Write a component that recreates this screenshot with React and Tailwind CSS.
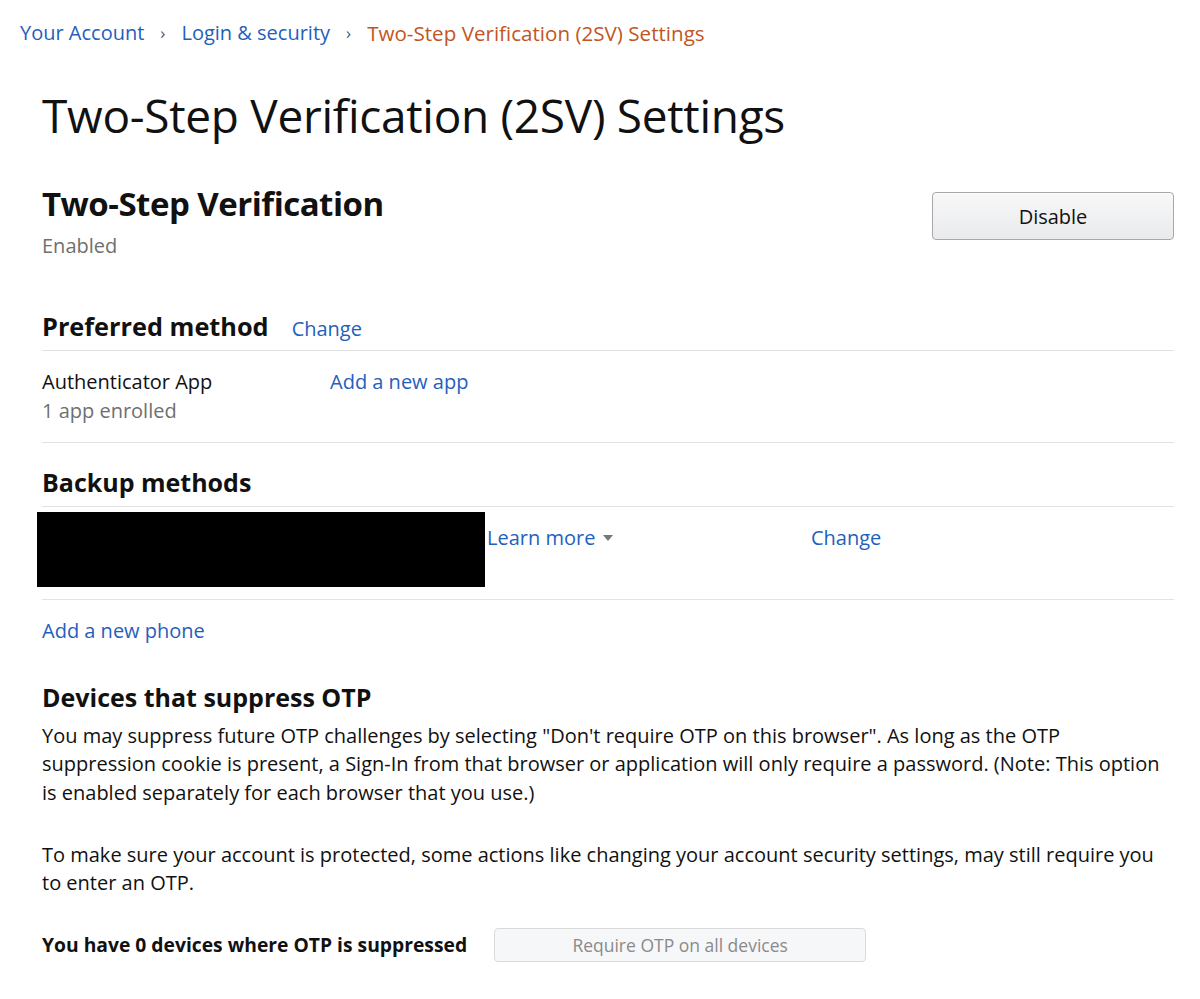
import React from "react";

function Hr() {
  return <div className="h-px bg-[#e3e3e3] w-full" />;
}

export default function App() {
  return (
    <div className="w-[1200px] h-[999px] bg-white text-[#111] overflow-hidden font-['Open_Sans',sans-serif]">
      {/* breadcrumb */}
      <div className="flex items-center pl-[20px] pt-[19px] text-[20px] leading-[28px]">
        <span className="text-[#1f60bd]">Your Account</span>
        <span className="mx-[16px] text-[#555] text-[17px]">›</span>
        <span className="text-[#1f60bd]">Login &amp; security</span>
        <span className="mx-[16px] text-[#555] text-[17px]">›</span>
        <span className="text-[#c2551e] text-[20.6px]">Two-Step Verification (2SV) Settings</span>
      </div>

      <div className="pl-[42px] pr-[26px]">
        <h1 className="mt-[40px] text-[46px] leading-[56px] font-normal tracking-[-0.3px]">
          Two-Step Verification (2SV) Settings
        </h1>

        <div className="flex justify-between mt-[41px]">
          <div>
            <div className="text-[33px] leading-[40px] font-bold tracking-[-0.5px]">Two-Step Verification</div>
            <div className="text-[20px] leading-[28px] text-[#6f6f6f] mt-[8px]">Enabled</div>
          </div>
          <button className="w-[242px] h-[48px] mt-[8px] rounded-[4px] border border-[#a8a8a8] bg-gradient-to-b from-[#f8f8f9] to-[#e9eaec] text-[20px] leading-[28px] pt-[2px] text-[#111] shadow-[0_1px_0_rgba(255,255,255,0.6)_inset]">
            Disable
          </button>
        </div>

        <div className="flex items-baseline mt-[49px] pb-[6px]">
          <div className="text-[25.3px] leading-[34px] font-bold">Preferred method</div>
          <div className="ml-[23px] text-[20px] text-[#1f60bd]">Change</div>
        </div>
        <Hr />
        <div className="flex pt-[16px] pb-[17px]">
          <div className="w-[288px]">
            <div className="text-[20px] leading-[29px]">Authenticator App</div>
            <div className="text-[20px] leading-[29px] text-[#6f6f6f]">1 app enrolled</div>
          </div>
          <div className="text-[20px] leading-[29px] text-[#1f60bd]">Add a new app</div>
        </div>
        <Hr />
        <div className="text-[25px] leading-[34px] font-bold mt-[22px] mb-[7px]">Backup methods</div>
        <Hr />
        <div className="flex items-start pt-[5px] pb-[12px] -ml-[5px]">
          <div className="w-[448px] h-[75px] bg-black" />
          <div className="w-[324px] flex items-center ml-[2px] mt-[12px] text-[20px] leading-[28px] text-[#1f60bd]">
            Learn more
            <span className="ml-[8px] inline-block w-0 h-0 border-l-[5px] border-r-[5px] border-t-[6px] border-l-transparent border-r-transparent border-t-[#777]" />
          </div>
          <div className="mt-[12px] text-[20px] leading-[28px] text-[#1f60bd]">Change</div>
        </div>
        <Hr />
        <div className="mt-[17px] text-[20px] leading-[28px] text-[#1f60bd]">Add a new phone</div>

        <div className="mt-[35px] text-[25px] leading-[34px] font-bold">Devices that suppress OTP</div>
        <p className="mt-[7.6px] text-[20px] leading-[28.7px] whitespace-nowrap">
          You may suppress future OTP challenges by selecting "Don't require OTP on this browser". As long as the OTP
          <br />
          suppression cookie is present, a Sign-In from that browser or application will only require a password. (Note: This option
          <br />
          is enabled separately for each browser that you use.)
        </p>
        <p className="mt-[33px] text-[20px] leading-[28.7px] whitespace-nowrap">
          To make sure your account is protected, some actions like changing your account security settings, may still require you
          <br />
          to enter an OTP.
        </p>
        <div className="flex items-center mt-[30px]">
          <div className="text-[19.3px] font-bold leading-[28px]">You have 0 devices where OTP is suppressed</div>
          <div className="ml-[27px] w-[372px] h-[34px] rounded-[4px] border border-[#dadada] bg-[#f6f7f8] flex items-center justify-center text-[17.5px] text-[#8a8a8a]">
            Require OTP on all devices
          </div>
        </div>
      </div>
    </div>
  );
}
